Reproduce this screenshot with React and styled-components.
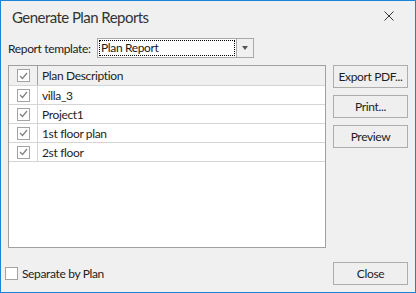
import React from "react";
import styled, { createGlobalStyle } from "styled-components";

const GlobalStyle = createGlobalStyle`
  html, body {
    margin: 0;
    padding: 0;
    background: #f0f0f0;
  }
  body {
    font-family: "Lato", "Noto Sans", sans-serif;
    font-size: 12px;
    letter-spacing: -0.35px;
    color: #1e1e1e;
  }
`;

const Window = styled.div`
  width: 416px;
  height: 293px;
  box-sizing: border-box;
  border: 1px solid #1883d7;
  background: #f0f0f0;
  display: flex;
  flex-direction: column;
`;

const TitleBar = styled.div`
  height: 30px;
  display: flex;
  align-items: center;
  justify-content: space-between;
  padding-left: 11px;
  padding-right: 21px;
`;

const Title = styled.div`
  font-size: 15px;
  letter-spacing: -0.55px;
  color: #333;
  padding-top: 2px;
`;

const CloseX = styled.svg`
  width: 10px;
  height: 10px;
  display: block;
`;

const Body = styled.div`
  padding: 7px 7px 0 7px;
  display: flex;
  flex-direction: column;
  flex: 1;
`;

const TemplateRow = styled.div`
  height: 20px;
  display: flex;
  align-items: center;
`;

const Label = styled.span`
  width: 89px;
  white-space: nowrap;
  color: #222;
`;

const Combo = styled.div`
  width: 157px;
  height: 20px;
  box-sizing: border-box;
  border: 1px solid #a9a9a9;
  display: flex;
  background: #fff;
`;

const ComboText = styled.div`
  flex: 1;
  margin: 1px;
  border: 1px dotted #000;
  padding-left: 1px;
  line-height: 14px;
  color: #1a1a1a;
`;

const ComboButton = styled.div`
  width: 16px;
  border-left: 1px solid #a9a9a9;
  background: #f0f0f0;
  display: flex;
  align-items: center;
  justify-content: center;
  &::after {
    content: "";
    border-left: 3px solid transparent;
    border-right: 3px solid transparent;
    border-top: 4px solid #555;
  }
`;

const Main = styled.div`
  display: flex;
  gap: 7px;
  margin-top: 7px;
`;

const Grid = styled.div`
  width: 318px;
  height: 183px;
  box-sizing: border-box;
  border: 1px solid #a0a0a0;
  background: #fff;
`;

const Row = styled.div`
  display: flex;
  height: ${(p) => (p.$header ? 20 : 19)}px;
  box-sizing: border-box;
  border-bottom: 1px solid #d5d5d5;
  background: ${(p) => (p.$header ? "#f0f0f0" : "#fff")};
`;

const CheckCell = styled.div`
  width: 29px;
  box-sizing: border-box;
  border-right: 1px solid ${(p) => (p.$header ? "#a0a0a0" : "#d5d5d5")};
  display: flex;
  align-items: center;
  justify-content: center;
`;

const TextCell = styled.div`
  flex: 1;
  padding-left: 4px;
  display: flex;
  align-items: center;
  color: #1e1e1e;
`;

const Box = styled.div`
  width: 13px;
  height: 13px;
  box-sizing: border-box;
  border: 1px solid #a3a3a3;
  background: #fff;
  display: flex;
  align-items: center;
  justify-content: center;
`;

const Buttons = styled.div`
  display: flex;
  flex-direction: column;
  gap: 7px;
`;

const Button = styled.div`
  width: 75px;
  height: 23px;
  box-sizing: border-box;
  border: 1px solid #adadad;
  background: #efefef;
  display: flex;
  align-items: center;
  justify-content: center;
  color: #1e1e1e;
  white-space: nowrap;
`;

const Footer = styled.div`
  display: flex;
  justify-content: space-between;
  align-items: center;
  margin-top: 14px;
`;

const CheckLabel = styled.div`
  display: flex;
  align-items: center;
  gap: 4px;
  margin-left: -3px;
  color: #222;
`;

function Check({ checked }) {
  return (
    <Box>
      {checked && (
        <svg width="9" height="8" viewBox="0 0 9 8">
          <path d="M1 4 L3.5 6.5 L8 1" fill="none" stroke="#808080" strokeWidth="1.2" />
        </svg>
      )}
    </Box>
  );
}

const plans = ["villa_3", "Project1", "1st floor plan", "2st floor"];

export default function App() {
  return (
    <>
      <GlobalStyle />
      <Window>
        <TitleBar>
          <Title>Generate Plan Reports</Title>
          <CloseX viewBox="0 0 10 10">
            <path d="M0.5 0.5 L9.5 9.5 M9.5 0.5 L0.5 9.5" stroke="#333" strokeWidth="1" />
          </CloseX>
        </TitleBar>
        <Body>
          <TemplateRow>
            <Label>Report template:</Label>
            <Combo>
              <ComboText>Plan Report</ComboText>
              <ComboButton />
            </Combo>
          </TemplateRow>
          <Main>
            <Grid>
              <Row $header>
                <CheckCell $header>
                  <Check checked />
                </CheckCell>
                <TextCell>Plan Description</TextCell>
              </Row>
              {plans.map((p) => (
                <Row key={p}>
                  <CheckCell>
                    <Check checked />
                  </CheckCell>
                  <TextCell>{p}</TextCell>
                </Row>
              ))}
            </Grid>
            <Buttons>
              <Button>Export PDF...</Button>
              <Button>Print...</Button>
              <Button>Preview</Button>
            </Buttons>
          </Main>
          <Footer>
            <CheckLabel>
              <Check />
              Separate by Plan
            </CheckLabel>
            <Button>Close</Button>
          </Footer>
        </Body>
      </Window>
    </>
  );
}
